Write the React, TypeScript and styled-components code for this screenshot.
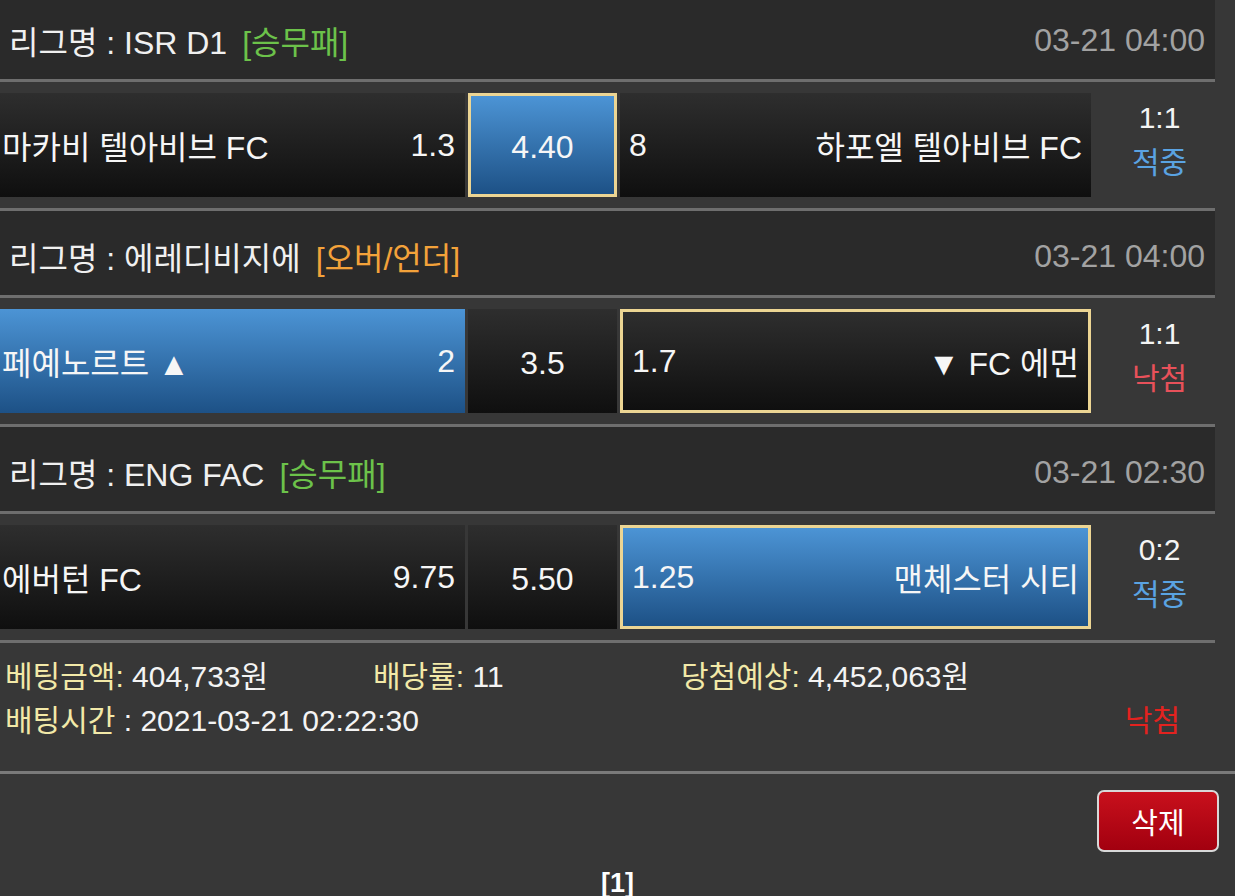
import React from 'react';
import styled, { createGlobalStyle, css } from 'styled-components';

const GlobalStyle = createGlobalStyle`
  html, body {
    margin: 0;
    padding: 0;
    background: #373737;
    overflow: hidden;
  }

  body {
    font-family: 'Liberation Sans', 'Noto Sans CJK KR', sans-serif;
    color: #f4f4f4;
  }
`;

const Page = styled.div`
  margin-top: -5px;
`;

const LeagueHeader = styled.div`
  box-sizing: border-box;
  display: flex;
  align-items: center;
  justify-content: space-between;
  width: calc(100% - 20px);
  height: 87px;
  padding: 6px 10px 0 9px;
  background: #2a2a2a;
  border-bottom: 3px solid #6e6e6e;
  font-size: 32px;
`;

const LeagueName = styled.div`
  display: flex;
  align-items: center;
  color: #f0f0f0;
`;

const BetType = styled.span<{ $kind: 'win' | 'ou' }>`
  margin-left: 15px;
  color: ${(p) => (p.$kind === 'ou' ? '#f3a23a' : '#6cc24a')};
`;

const MatchTime = styled.span`
  color: #a2a2a2;
`;

const MatchRow = styled.div`
  box-sizing: border-box;
  display: grid;
  grid-template-columns: 465px 149px 471px 1fr;
  column-gap: 3px;
  width: calc(100% - 20px);
  height: 129px;
  padding: 11px 0 11px;
  border-bottom: 3px solid #6e6e6e;
`;

const Cell = styled.div<{ $active?: boolean; $picked?: boolean }>`
  box-sizing: border-box;
  display: flex;
  align-items: center;
  justify-content: space-between;
  font-size: 32px;
  color: #f6f6f6;
  background: linear-gradient(#2e2e2e, #0f0f0f);

  ${(p) =>
    p.$active &&
    css`
      background: linear-gradient(#4c94d5, #1d5186);
    `}

  ${(p) =>
    p.$picked &&
    css`
      border: 3px solid #ecd593;
    `}
`;

const HomeCell = styled(Cell)`
  padding: 0 10px 0 2px;
`;

const DrawCell = styled(Cell)`
  justify-content: center;
  padding-top: 5px;
`;

const AwayCell = styled(Cell)`
  padding: 0 9px 0 9px;
`;

const ResultCell = styled.div`
  display: flex;
  flex-direction: column;
  align-items: center;
  justify-content: center;
  padding: 0 0 10px 10px;
  font-size: 30px;
  line-height: 45px;
`;

const Outcome = styled.span<{ $won: boolean }>`
  color: ${(p) => (p.$won ? '#5aa3e2' : '#e8515a')};
`;

const BetInfo = styled.div`
  box-sizing: border-box;
  display: grid;
  grid-template-columns: 368px 308px 1fr;
  align-content: start;
  height: 131px;
  padding: 12px 0 0 5px;
  border-bottom: 3px solid #7a7a7a;
  font-size: 30px;
  line-height: 44px;
`;

const Label = styled.span`
  color: #f2e9a8;
`;

const WideCell = styled.div`
  grid-column: span 2;
`;

const LostMark = styled.div`
  justify-self: end;
  padding-right: 55px;
  color: #e3221f;
`;

const Footer = styled.div`
  display: flex;
  justify-content: flex-end;
  padding: 16px 16px 0 0;
`;

const DeleteButton = styled.button`
  width: 122px;
  height: 62px;
  border: 2px solid #d8d8d8;
  border-radius: 7px;
  background: linear-gradient(#c8101c, #a2000f);
  color: #fff;
  font-family: inherit;
  font-size: 29px;
  cursor: pointer;
`;

const Pager = styled.div`
  margin-top: 16px;
  text-align: center;
  font-size: 27px;
  font-weight: bold;
  color: #fff;
`;

type Pick = 'home' | 'draw' | 'away';

interface Match {
  league: string;
  type: string;
  kind: 'win' | 'ou';
  time: string;
  home: string;
  homeOdds: string;
  mid: string;
  awayOdds: string;
  away: string;
  score: string;
  won: boolean;
  active: Pick;
  picked: Pick | null;
}

const matches: Match[] = [
  {
    league: 'ISR D1',
    type: '[승무패]',
    kind: 'win',
    time: '03-21 04:00',
    home: '마카비 텔아비브 FC',
    homeOdds: '1.3',
    mid: '4.40',
    awayOdds: '8',
    away: '하포엘 텔아비브 FC',
    score: '1:1',
    won: true,
    active: 'draw',
    picked: 'draw',
  },
  {
    league: '에레디비지에',
    type: '[오버/언더]',
    kind: 'ou',
    time: '03-21 04:00',
    home: '페예노르트 ▲',
    homeOdds: '2',
    mid: '3.5',
    awayOdds: '1.7',
    away: '▼ FC 에먼',
    score: '1:1',
    won: false,
    active: 'home',
    picked: 'away',
  },
  {
    league: 'ENG FAC',
    type: '[승무패]',
    kind: 'win',
    time: '03-21 02:30',
    home: '에버턴 FC',
    homeOdds: '9.75',
    mid: '5.50',
    awayOdds: '1.25',
    away: '맨체스터 시티',
    score: '0:2',
    won: true,
    active: 'away',
    picked: 'away',
  },
];

const App: React.FC = () => {
  return (
    <Page>
      <GlobalStyle />
      {matches.map((m, i) => (
        <React.Fragment key={i}>
          <LeagueHeader>
            <LeagueName>
              리그명 : {m.league}
              <BetType $kind={m.kind}>{m.type}</BetType>
            </LeagueName>
            <MatchTime>{m.time}</MatchTime>
          </LeagueHeader>
          <MatchRow>
            <HomeCell $active={m.active === 'home'} $picked={m.picked === 'home'}>
              <span>{m.home}</span>
              <span>{m.homeOdds}</span>
            </HomeCell>
            <DrawCell $active={m.active === 'draw'} $picked={m.picked === 'draw'}>
              {m.mid}
            </DrawCell>
            <AwayCell $active={m.active === 'away'} $picked={m.picked === 'away'}>
              <span>{m.awayOdds}</span>
              <span>{m.away}</span>
            </AwayCell>
            <ResultCell>
              <span>{m.score}</span>
              <Outcome $won={m.won}>{m.won ? '적중' : '낙첨'}</Outcome>
            </ResultCell>
          </MatchRow>
        </React.Fragment>
      ))}
      <BetInfo>
        <div>
          <Label>베팅금액:</Label> 404,733원
        </div>
        <div>
          <Label>배당률:</Label> 11
        </div>
        <div>
          <Label>당첨예상:</Label> 4,452,063원
        </div>
        <WideCell>
          <Label>배팅시간</Label> : 2021-03-21 02:22:30
        </WideCell>
        <LostMark>낙첨</LostMark>
      </BetInfo>
      <Footer>
        <DeleteButton>삭제</DeleteButton>
      </Footer>
      <Pager>[1]</Pager>
    </Page>
  );
};

export default App;
